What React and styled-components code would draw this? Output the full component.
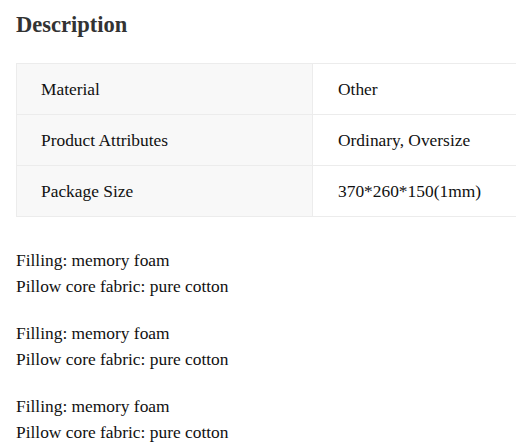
import React from 'react';
import styled, { createGlobalStyle } from 'styled-components';

const GlobalStyle = createGlobalStyle`
    html, body {
        margin: 0;
        padding: 0;
        background: #fff;
    }
`;

const specs = [
    { name: 'Material', value: 'Other' },
    { name: 'Product Attributes', value: 'Ordinary, Oversize' },
    { name: 'Package Size', value: '370*260*150(1mm)' },
];

const notes = [
    ['Filling: memory foam', 'Pillow core fabric: pure cotton'],
    ['Filling: memory foam', 'Pillow core fabric: pure cotton'],
    ['Filling: memory foam', 'Pillow core fabric: pure cotton'],
];

const App = () => {
    return (
        <>
            <GlobalStyle />
            <Section>
                <Title>Description</Title>
                <SpecTable>
                    <colgroup>
                        <col style={{ width: 296 }} />
                        <col />
                    </colgroup>
                    <tbody>
                        {specs.map((row, ind) => (
                            <tr key={ind}>
                                <Cell $label>{row.name}</Cell>
                                <Cell>{row.value}</Cell>
                            </tr>
                        ))}
                    </tbody>
                </SpecTable>
                <Notes>
                    {notes.map((lines, ind) => (
                        <p key={ind}>
                            {lines[0]}
                            <br />
                            {lines[1]}
                        </p>
                    ))}
                </Notes>
            </Section>
        </>
    );
};

const Section = styled.section`
    padding: 0 0 0 16px;
    font-family: "Liberation Serif", "Times New Roman", serif;
    color: #111;
`;

const Title = styled.h2`
    margin: 0;
    padding-top: 11px;
    font-size: 22.5px;
    line-height: 28px;
    font-weight: 700;
    color: #333;
`;

const SpecTable = styled.table`
    margin-top: 24px;
    width: 100%;
    border-collapse: collapse;
    table-layout: fixed;
`;

const Cell = styled.td`
    height: 50px;
    padding: 0 25px 0 ${(p) => (p.$label ? '24px' : '25px')};
    border: 1px solid #ececec;
    border-right: ${(p) => (p.$label ? '1px solid #ececec' : 'none')};
    font-size: 17.4px;
    color: #111;
    background: ${(p) => (p.$label ? '#f8f8f8' : '#fff')};
    vertical-align: middle;
    white-space: nowrap;
`;

const Notes = styled.div`
    margin-top: 30px;

    p{
        margin: 0 0 21px;
        font-size: 17.4px;
        line-height: 26px;
        color: #111;
    }
`;

export default App;
